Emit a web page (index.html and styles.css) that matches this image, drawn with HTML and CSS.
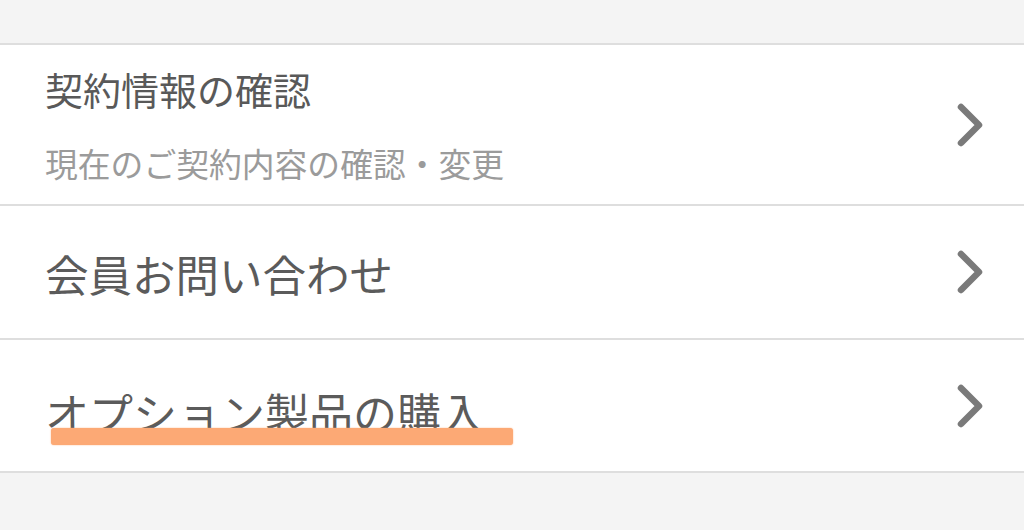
FILE: index.html
```html
<!DOCTYPE html>
<html lang="ja">
<head>
<meta charset="utf-8">
<title>メニュー</title>
<link rel="stylesheet" href="styles.css">
</head>
<body>
<ul class="menu">
  <li class="item item-double">
    <div class="texts">
      <div class="title">契約情報の確認</div>
      <div class="sub">現在のご契約内容の確認・変更</div>
    </div>
    <svg class="chev" viewBox="0 0 32 48" width="32" height="48"><polyline points="8,6 26,24 8,42"/></svg>
  </li>
  <li class="item item-single">
    <div class="label">会員お問い合わせ</div>
    <svg class="chev" viewBox="0 0 32 48" width="32" height="48"><polyline points="8,6 26,24 8,42"/></svg>
  </li>
  <li class="item item-single">
    <div class="label marked">オプション製品の購入</div>
    <svg class="chev" viewBox="0 0 32 48" width="32" height="48"><polyline points="8,6 26,24 8,42"/></svg>
  </li>
</ul>
</body>
</html>
```
FILE: styles.css
```css
html, body {
  margin: 0;
  padding: 0;
  background: #f4f4f4;
  font-family: "Noto Sans CJK JP", "Noto Sans", sans-serif;
}
.menu {
  list-style: none;
  margin: 43px 0 0;
  padding: 0;
  background: #fff;
  border-top: 2px solid #dedede;
}
.item {
  display: flex;
  align-items: center;
  justify-content: space-between;
  padding: 0 39px 0 45px;
  border-bottom: 2px solid #dedede;
  box-sizing: border-box;
}
.item-double { height: 161px; }
.item-single { height: 134px; }
.item-single:last-child { height: 133px; }
.texts {
  display: flex;
  flex-direction: column;
  padding: 2px 0 0;
}
.title {
  font-size: 38px;
  line-height: 48px;
  color: #595959;
}
.sub {
  margin-top: 26px;
  font-size: 32.8px;
  line-height: 48px;
  color: #9b9b9b;
}
.label {
  position: relative;
  padding-top: 4px;
  font-size: 43.5px;
  line-height: 48px;
  color: #5b5b5b;
}
.label.marked {
  font-size: 44px;
  padding-top: 13px;
}
.marked::after {
  content: "";
  position: absolute;
  left: 6px;
  top: 53px;
  width: 462px;
  height: 17px;
  border-radius: 3px;
  background: #fca975;
  box-shadow: 0 0 1.5px #fca975;
}
.chev {
  flex: none;
  fill: none;
  stroke: #7a7a7a;
  stroke-width: 6.5;
  stroke-linecap: round;
  stroke-linejoin: round;
}
```
